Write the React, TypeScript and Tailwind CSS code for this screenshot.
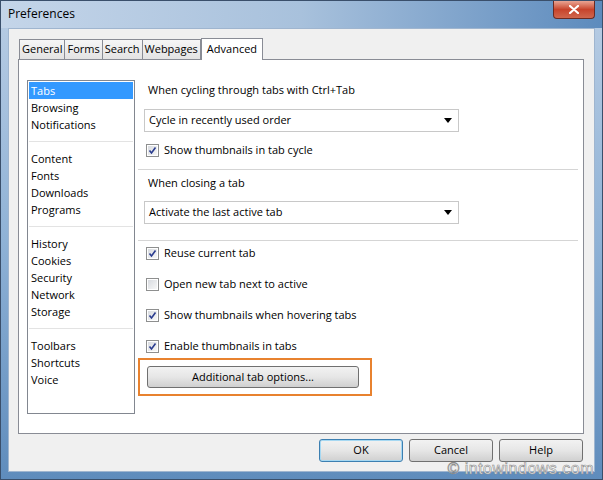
import React from "react";

const font = { fontFamily: '"Open Sans", "Noto Sans", sans-serif' };

const groups = [
  ["Tabs", "Browsing", "Notifications"],
  ["Content", "Fonts", "Downloads", "Programs"],
  ["History", "Cookies", "Security", "Network", "Storage"],
  ["Toolbars", "Shortcuts", "Voice"],
];

const tabs = ["General", "Forms", "Search", "Webpages"];

function Checkbox({ checked }: { checked: boolean }) {
  return (
    <div className="w-[13px] h-[13px] border border-[#8e8f8f] bg-white p-[1px] shrink-0">
      <div className="w-full h-full bg-gradient-to-br from-[#d8dbe0] to-[#f7f7f7] flex items-center justify-center">
        {checked && (
          <svg width="9" height="9" viewBox="0 0 9 9">
            <path d="M1.5 4.5 L3.5 7 L7.5 1.5" stroke="#2a3c8f" strokeWidth="1.6" fill="none" />
          </svg>
        )}
      </div>
    </div>
  );
}

function CheckRow({ checked, label }: { checked: boolean; label: string }) {
  return (
    <div className="flex items-center gap-[5px] h-[17px] pl-[8px]">
      <Checkbox checked={checked} />
      <span>{label}</span>
    </div>
  );
}

function Select({ value }: { value: string }) {
  return (
    <div className="ml-[6px] w-[315px] h-[23px] border border-[#c8c8c8] bg-white flex items-center justify-between pl-[4px] pr-[6px]">
      <span>{value}</span>
      <svg width="8" height="5" viewBox="0 0 8 5">
        <path d="M0 0 H8 L4 5 Z" fill="#000" />
      </svg>
    </div>
  );
}

function Button({ label, primary }: { label: string; primary?: boolean }) {
  return (
    <div
      className={`w-[84px] h-[23px] rounded-[3px] border flex items-center justify-center bg-gradient-to-b from-[#f2f2f2] via-[#e6e6e6] to-[#d0d0d0] ${
        primary ? "border-[#3c7fb1] shadow-[inset_0_0_0_1px_#a6d8f2]" : "border-[#707070]"
      }`}
    >
      {label}
    </div>
  );
}

export default function App() {
  return (
    <div
      className="relative w-[603px] h-[480px] flex flex-col overflow-hidden text-[11px] text-black bg-gradient-to-b from-[#b9cde4] via-[#8fb2d6] to-[#5f8cbc] border border-[#3a4f6b]"
      style={font}
    >
      {/* Title bar */}
      <div className="h-[27px] flex items-start justify-between bg-gradient-to-r from-[#c4d5e9] via-[#a8c1dc] to-[#5d8bbd]">
        <div className="pl-[7px] pt-[4px] text-[12px]">Preferences</div>
        <div className="mr-[7px] w-[42px] h-[18px] rounded-b-[4px] border border-[#6b2a22] border-t-0 bg-gradient-to-b from-[#e8a493] via-[#c7432b] to-[#d0664d] flex items-center justify-center">
          <svg width="10" height="9" viewBox="0 0 10 9">
            <path d="M1 1 L9 8 M9 1 L1 8" stroke="#fff" strokeWidth="2.2" strokeLinecap="round" />
          </svg>
        </div>
      </div>

      {/* Client area */}
      <div className="flex-1 mx-[7px] mb-[7px] bg-[#f0f0f0] border border-[#9fb5cf] flex flex-col pl-[9px] pr-[10px] pt-[8px]">
        {/* Tabs */}
        <div className="flex items-end h-[22px] pl-[1px]">
          {tabs.map((t) => (
            <div
              key={t}
              className="h-[20px] px-[2px] mr-[-1px] border border-b-0 border-[#898c95] bg-gradient-to-b from-[#f6f6f6] to-[#e3e3e3] flex items-center"
            >
              {t}
            </div>
          ))}
          <div className="h-[22px] px-[5px] ml-[1px] mb-[-1px] border border-b-0 border-[#898c95] bg-white flex items-center relative z-10">
            Advanced
          </div>
        </div>

        {/* Panel */}
        <div className="h-[375px] bg-white border border-[#898c95] flex pt-[20px] pl-[8px]">
          {/* Left list */}
          <div className="w-[108px] h-[334px] border border-[#828790] flex flex-col p-[1px]">
            {groups.map((g, gi) => (
              <div key={gi} className={gi > 0 ? "border-t border-[#e3e3e3] mt-[8px] pt-[8px]" : ""}>
                {g.map((item) => (
                  <div
                    key={item}
                    className={`h-[17px] leading-[17px] pl-[2px] ${
                      item === "Tabs" ? "bg-[#3399ff] text-white" : ""
                    }`}
                  >
                    {item}
                  </div>
                ))}
              </div>
            ))}
          </div>

          {/* Right options */}
          <div className="ml-[3px] w-[441px] flex flex-col">
            <div className="pl-[10px] pt-[2px] h-[29px]">When cycling through tabs with Ctrl+Tab</div>
            <Select value="Cycle in recently used order" />
            <div className="mt-[10px]">
              <CheckRow checked label="Show thumbnails in tab cycle" />
            </div>
            <div className="mt-[10px] border-t border-[#d5d5d5] w-[440px]" />
            <div className="pl-[10px] pt-[5px] h-[31px]">When closing a tab</div>
            <Select value="Activate the last active tab" />
            <div className="mt-[16px] border-t border-[#d5d5d5] w-[440px]" />
            <div className="mt-[4px] flex flex-col gap-[14px]">
              <CheckRow checked label="Reuse current tab" />
              <CheckRow checked={false} label="Open new tab next to active" />
              <CheckRow checked label="Show thumbnails when hovering tabs" />
              <CheckRow checked label="Enable thumbnails in tabs" />
            </div>
            <div className="mt-[3px] w-[234px] h-[38px] border-2 border-[#e8822f] flex items-center pl-[7px]">
              <div className="w-[212px] h-[22px] rounded-[3px] border border-[#707070] bg-gradient-to-b from-[#f2f2f2] via-[#e6e6e6] to-[#d0d0d0] flex items-center justify-center">
                Additional tab options...
              </div>
            </div>
          </div>
        </div>

        {/* Bottom buttons */}
        <div className="flex justify-end gap-[6px] mt-[5px] pr-[1px]">
          <Button label="OK" primary />
          <Button label="Cancel" />
          <Button label="Help" />
        </div>
      </div>

      {/* Watermark */}
      <div
        className="absolute right-[8px] bottom-[2px] text-[16px] leading-none text-white tracking-[0.5px]"
        style={{ fontFamily: '"Liberation Sans", Arial, sans-serif', WebkitTextStroke: "0.6px #8a8a8a" }}
      >
        © intowindows.com
      </div>
    </div>
  );
}
